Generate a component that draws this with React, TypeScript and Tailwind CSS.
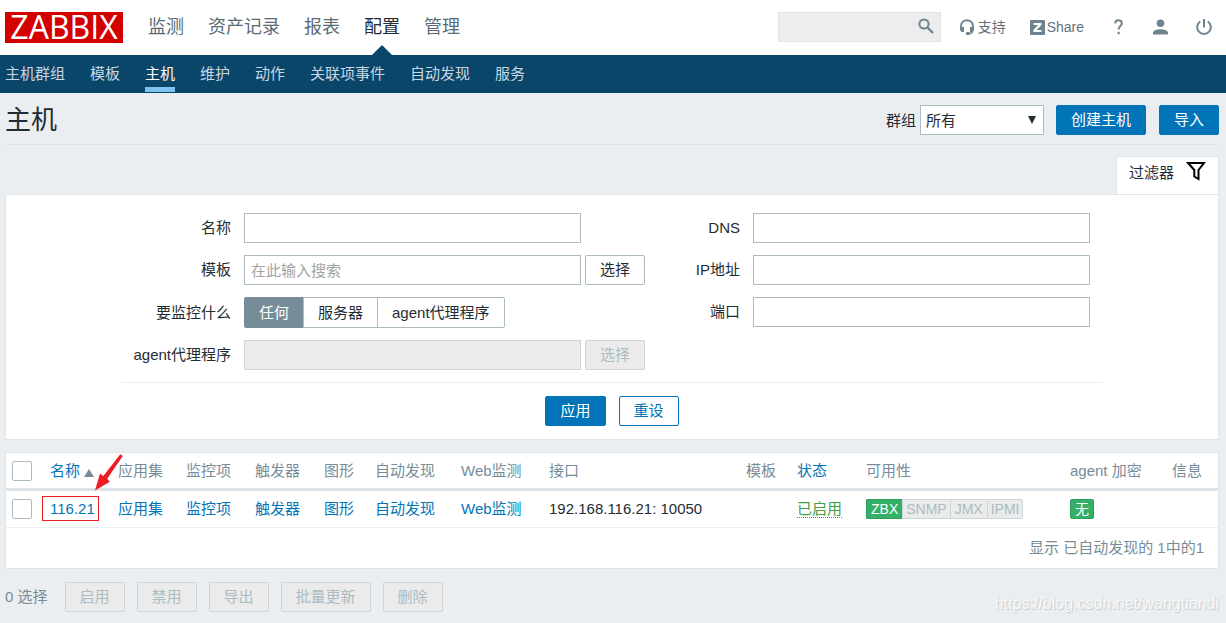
import React, { useState } from "react";

const topMenu = ["监测", "资产记录", "报表", "配置", "管理"];
const subMenu = ["主机群组", "模板", "主机", "维护", "动作", "关联项事件", "自动发现", "服务"];
const hostLinks = ["应用集", "监控项", "触发器", "图形", "自动发现", "Web监测"];
const monitoredBy = ["任何", "服务器", "agent代理程序"];
const massActions = ["启用", "禁用", "导出", "批量更新", "删除"];

const fieldClass = "h-[30px] min-w-0 border border-[#acbbc2] bg-white px-1.5 text-[#1f2c33] placeholder:text-[#a3a3a3] outline-none";
const primaryClass = "h-[30px] rounded-xs border border-[#0275b8] bg-[#0275b8] px-3.5 text-white";
const plainClass = "h-[30px] rounded-xs border border-[#acbbc2] bg-white px-3.5";
const disabledClass = "h-[30px] rounded-xs border border-[#ccd5d9] bg-[#ebebeb] px-3.5 text-[#acbbc2]";
const checkClass = "block size-5 appearance-none rounded-xs border border-[#acbbc2] bg-white checked:bg-[#0275b8]";

function TopBar() {
  return (
    <header className="flex h-[55px] items-center bg-white pb-px pl-[5px] pr-3.5">
      <a
        href="#home"
        className="flex h-[31px] w-[118px] items-center justify-center bg-[#d40000] font-['Open_Sans'] text-[32px] font-medium leading-none text-white"
      >
        ZABBIX
      </a>
      <nav className="-mb-px ml-[25px] flex h-[55px] gap-6 text-[18px]">
        {topMenu.map((item) => (
          <a
            key={item}
            href="#menu"
            className={item === "配置" ? "relative flex items-center pb-0.5 text-[#1f2c33]" : "flex items-center pb-0.5 text-[#5a6b75]"}
          >
            {item}
            {item === "配置" && (
              <span className="absolute bottom-0 left-1/2 -translate-x-1/2 border-x-10 border-b-10 border-x-transparent border-b-[#0a466a]" />
            )}
          </a>
        ))}
      </nav>
      <div className="ml-auto flex items-center text-sm text-[#5f717b]">
        <form className="relative h-[30px] w-[163px]">
          <input aria-label="搜索" className="h-full w-full border border-[#e3e3e3] bg-[#ededed] pl-2 pr-8 outline-none" />
          <button type="button" aria-label="搜索" className="absolute right-[7px] top-1.5 text-[#6f838e]">
            <svg width="16" height="16" viewBox="0 0 16 16" fill="none" stroke="currentColor" strokeWidth="2">
              <circle cx="6" cy="6" r="4.6" />
              <path d="M9.5 9.5 15 15" strokeWidth="2.4" />
            </svg>
          </button>
        </form>
        <a href="#support" className="ml-[19px] flex items-center gap-1">
          <svg width="14" height="16" viewBox="0 0 14 16" fill="none" className="text-[#6f838e]">
            <path d="M1.100 9V6.600C1.100 3.300 3.800 1.200 7 1.200s5.900 2.100 5.900 5.400V9" stroke="currentColor" strokeWidth="1.900" />
            <path d="M0 8h4v5H2.500C1 13 0 12 0 10.500zM10 8h4v2.500c0 1.500-1 2.500-2.500 2.500H10z" fill="currentColor" />
            <path d="M12.700 11.500c0 2-1.200 3-3.200 3" stroke="currentColor" strokeWidth="1.300" />
            <rect x="6" y="13" width="4" height="3" rx="1" fill="currentColor" />
          </svg>
          支持
        </a>
        <a href="#share" className="ml-6 flex items-center gap-0.5">
          <svg width="15" height="15" viewBox="0 0 15 15">
            <rect width="15" height="15" rx="1" fill="#6f838e" />
            <path d="M3.600 3h7.800v1.900L6.600 10h4.900v2H3.400v-1.900L8.200 5H3.600z" fill="#fff" />
          </svg>
          Share
        </a>
        <a href="#help" aria-label="帮助" className="ml-[30px] text-[#6f838e]">
          <svg width="9" height="16" viewBox="0 0 9 16" fill="none" stroke="currentColor" strokeWidth="2">
            <path d="M1.200 4.600C1.200 2.400 2.500 1.200 4.500 1.200s3.300 1.200 3.300 3c0 2.600-3.200 3-3.200 6.300" />
            <path d="M3.500 14h2.200" strokeWidth="2.400" />
          </svg>
        </a>
        <a href="#profile" aria-label="用户" className="ml-[30px] text-[#6f838e]">
          <svg width="15" height="16" viewBox="0 0 15 16" fill="currentColor">
            <circle cx="7.500" cy="4.200" r="3.800" />
            <path d="M0 15.500v-1.700C0 11.200 4.500 10.200 7.500 10.200S15 11.200 15 13.800v1.700z" />
          </svg>
        </a>
        <a href="#logout" aria-label="退出" className="ml-7 text-[#6f838e]">
          <svg width="16" height="16" viewBox="0 0 16 16" fill="none" stroke="currentColor" strokeWidth="2">
            <path d="M8 0v8.500M4.200 2.500a6.800 6.800 0 1 0 7.600 0" />
          </svg>
        </a>
      </div>
    </header>
  );
}

function Field({ id, label, wide, children }: { id: string; label: string; wide?: boolean; children: React.ReactNode }) {
  return (
    <div className="flex items-center">
      <label htmlFor={id} className={wide ? "w-[110px] shrink-0 text-right" : "w-[95px] shrink-0 text-right"}>
        {label}
      </label>
      <div className="ml-[13px] flex min-w-0 gap-1">{children}</div>
    </div>
  );
}

function Filter() {
  const [source, setSource] = useState("任何");
  return (
    <section>
      <div className="flex justify-end pt-[11px]">
        <button type="button" className="flex h-[38px] w-[103px] justify-between rounded-t-xs border border-b-0 border-[#dfe4e7] bg-white pl-3 pr-3 pt-1">
          <span className="leading-6">过滤器</span>
          <svg width="20" height="20" viewBox="0 0 20 20" fill="none" stroke="#000" strokeWidth="2">
            <path d="M2 2h16l-5.500 7v9L8.300 15.500V9z" />
          </svg>
        </button>
      </div>
      <form className="border border-[#dfe4e7] bg-white pb-[13px] pt-[18px]">
        <div className="mx-auto max-w-[982px]">
          <div className="flex border-b border-[#ebeef0] pb-3">
            <div className="flex flex-col gap-3">
              <Field id="name" label="名称" wide>
                <input id="name" className={`${fieldClass} w-[337px]`} />
              </Field>
              <Field id="template" label="模板" wide>
                <input id="template" placeholder="在此输入搜索" className={`${fieldClass} w-[337px]`} />
                <button type="button" className={plainClass}>选择</button>
              </Field>
              <Field id="source-0" label="要监控什么" wide>
                <div className="flex h-[31px]">
                  {monitoredBy.map((item, i) => (
                    <label
                      key={item}
                      className="-ml-px flex cursor-pointer items-center border border-[#acbbc2] px-3.5 first:ml-0 first:rounded-l-xs last:rounded-r-xs has-checked:border-[#768d99] has-checked:bg-[#768d99] has-checked:text-white"
                    >
                      <input
                        id={`source-${i}`}
                        type="radio"
                        name="source"
                        className="sr-only"
                        checked={source === item}
                        onChange={() => setSource(item)}
                      />
                      {item}
                    </label>
                  ))}
                </div>
              </Field>
              <Field id="proxy" label="agent代理程序" wide>
                <input id="proxy" disabled className="h-[30px] w-[337px] border border-[#ccd5d9] bg-[#ebebeb]" />
                <button type="button" disabled className={disabledClass}>选择</button>
              </Field>
            </div>
            <div className="flex flex-col gap-3">
              {["DNS", "IP地址", "端口"].map((item) => (
                <Field key={item} id={item} label={item}>
                  <input id={item} className={`${fieldClass} w-[337px]`} />
                </Field>
              ))}
            </div>
          </div>
          <div className="flex justify-center gap-[13px] pt-[13px]">
            <button type="button" className={primaryClass}>应用</button>
            <button type="button" className="h-[30px] rounded-xs border border-[#0275b8] bg-white px-3.5 text-[#0275b8]">重设</button>
          </div>
        </div>
      </form>
    </section>
  );
}

function HostTable() {
  return (
    <table className="mt-3 w-full table-fixed border-separate border-spacing-0 border border-[#dfe4e7] bg-white text-left [&_td]:p-0 [&_td]:pl-1.5 [&_th]:p-0 [&_th]:pl-1.5 [&_th]:font-normal [&_th]:border-b-3 [&_th]:border-[#dce2e5]">
      <colgroup>
        <col className="w-[38px]" />
        <col className="w-[68px]" />
        <col className="w-[68px]" />
        <col className="w-[69px]" />
        <col className="w-[69px]" />
        <col className="w-[51px]" />
        <col className="w-[86px]" />
        <col className="w-[88px]" />
        <col />
        <col className="w-[51px]" />
        <col className="w-[69px]" />
        <col className="w-[204px]" />
        <col className="w-[102px]" />
        <col className="w-[52px]" />
      </colgroup>
      <thead>
        <tr className="h-[38px] whitespace-nowrap text-[#768d99]">
          <th><input type="checkbox" aria-label="全选" className={checkClass} /></th>
          <th>
            <a href="#sort" className="relative flex items-center gap-1 text-[#0275b8]">
              名称
              <span className="mt-1 border-x-5 border-b-8 border-x-transparent border-b-[#768d99]" />
              <svg className="pointer-events-none absolute -top-2 left-11 z-10 text-[#ee1c25]" width="30" height="40" viewBox="0 0 30 40" fill="currentColor">
                <path d="M26.300 1.200 28.800 3 13.200 25.700l2.600 3L1 37.500 6 20.500l3.300 2.500z" />
              </svg>
            </a>
          </th>
          {hostLinks.map((item) => <th key={item}>{item}</th>)}
          <th>接口</th>
          <th>模板</th>
          <th><a href="#status" className="text-[#0275b8]">状态</a></th>
          <th>可用性</th>
          <th>agent 加密</th>
          <th>信息</th>
        </tr>
      </thead>
      <tbody>
        <tr className="h-[37px] whitespace-nowrap [&>td]:border-b [&>td]:border-[#ebeef0]">
          <td><input type="checkbox" aria-label="116.21" className={checkClass} /></td>
          <td>
            <a href="#host" className="relative text-[#0275b8]">
              116.21
              <span className="pointer-events-none absolute -left-2 -top-1 h-[25px] w-[57px] border border-[#ee1c25]" />
            </a>
          </td>
          {hostLinks.map((item) => (
            <td key={item}><a href="#item" className="text-[#0275b8]">{item}</a></td>
          ))}
          <td>192.168.116.21: 10050</td>
          <td />
          <td><a href="#enabled" className="inline-block border-b border-dotted border-[#429e47] leading-[17px] text-[#429e47]">已启用</a></td>
          <td>
            <div className="flex h-5 text-sm leading-[18px] text-[#acbbc2]">
              <span className="rounded-l-xs border border-r-0 border-[#2f9f5e] bg-[#34af67] px-1 text-white">ZBX</span>
              <span className="border border-r-0 border-[#ccd5d9] bg-[#ebebeb] px-[3px]">SNMP</span>
              <span className="border border-r-0 border-[#ccd5d9] bg-[#ebebeb] px-1">JMX</span>
              <span className="rounded-r-xs border border-[#ccd5d9] bg-[#ebebeb] px-[3px]">IPMI</span>
            </div>
          </td>
          <td>
            <span className="flex h-5 w-6 items-center justify-center rounded-xs border border-[#2f9f5e] bg-[#34af67] text-sm text-white">无</span>
          </td>
          <td />
        </tr>
        <tr className="h-10 text-[#768d99]">
          <td colSpan={14} className="text-right"><span className="pr-3.5">显示 已自动发现的 1中的1</span></td>
        </tr>
      </tbody>
    </table>
  );
}

export default function App() {
  return (
    <div className="min-h-screen bg-[#ebeef0] font-['Liberation_Sans','Noto_Sans_CJK_SC',sans-serif] text-[15px] leading-5 text-[#1f2c33]">
      <TopBar />
      <nav className="flex h-[38px] gap-[25px] bg-[#0a466a] pl-[5px] text-[#c8d8e2]">
        {subMenu.map((item) => (
          <a
            key={item}
            href="#section"
            className={item === "主机" ? "relative flex items-center text-white" : "flex items-center"}
          >
            {item}
            {item === "主机" && <span className="absolute inset-x-0 bottom-px h-[5px] bg-[#7dc3f2]" />}
          </a>
        ))}
      </nav>
      <main className="pl-[5px] pr-[7px]">
        <div className="flex items-center border-b border-[#dfe4e7] pb-[9px] pt-3">
          <h1 className="text-[26px] leading-[30px]">主机</h1>
          <label htmlFor="group" className="ml-auto mr-1 pt-0.5">群组</label>
          <div className="relative">
            <select id="group" className="block h-[30px] w-[124px] appearance-none border border-[#acbbc2] bg-white pl-[5px] pt-0.5 outline-none">
              <option>所有</option>
            </select>
            <svg className="pointer-events-none absolute right-2 top-[11px]" width="8" height="8" viewBox="0 0 8 8">
              <path d="M0 0h8L4 8z" fill="#1f2c33" />
            </svg>
          </div>
          <button type="button" className={`${primaryClass} ml-3`}>创建主机</button>
          <button type="button" className={`${primaryClass} ml-[13px]`}>导入</button>
        </div>
        <Filter />
        <HostTable />
        <footer className="flex items-start gap-3 pt-[13px]">
          <span className="mr-[5px] leading-[30px] text-[#768d99]">0 选择</span>
          {massActions.map((item) => (
            <button key={item} type="button" disabled className={disabledClass}>{item}</button>
          ))}
          <span className="ml-auto pt-2.5 text-base text-[#f6f8f9] [text-shadow:1px_1px_1px_#c3c8cb]">https://blog.csdn.net/wangtiandi</span>
        </footer>
      </main>
    </div>
  );
}
